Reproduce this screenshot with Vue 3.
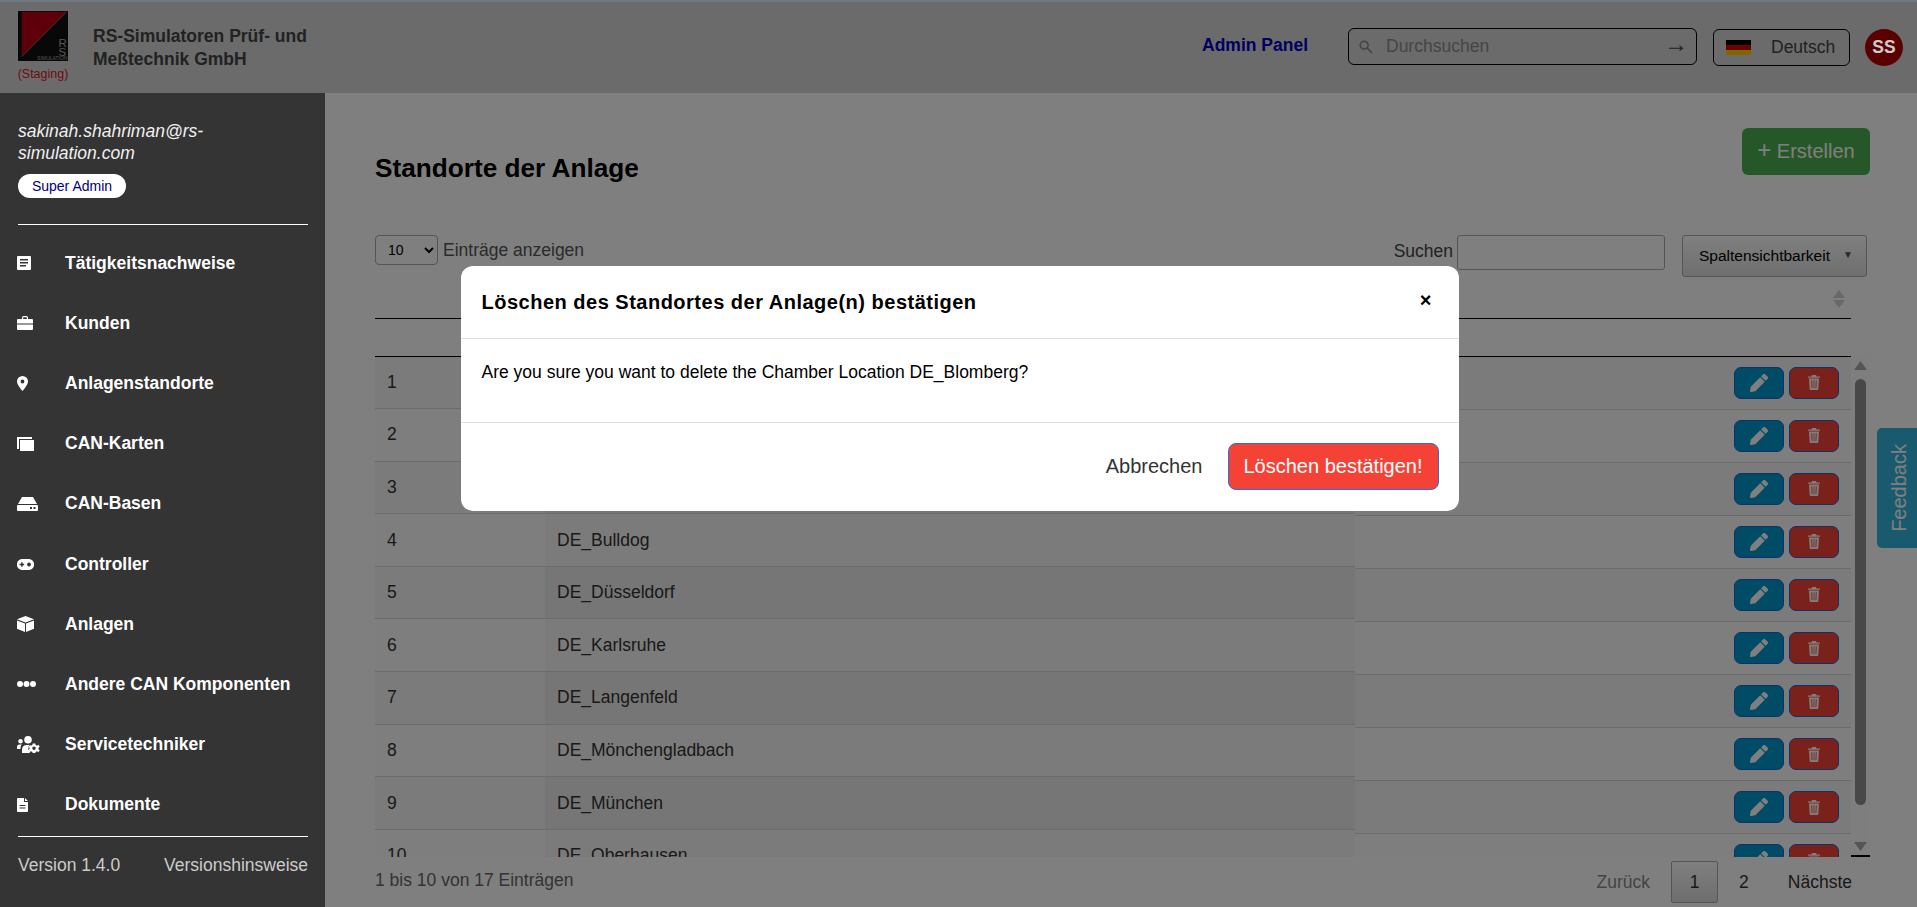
<template>
  <div class="page">
    <header class="topbar">
      <div class="brand">
        <svg class="logo" width="50" height="50" viewBox="0 0 50 50">
          <rect width="50" height="50" fill="#111" />
          <polygon points="3.700,0.700 48.700,0.700 3.700,45.700" fill="#bc0014" />
          <line x1="3.700" y1="45.700" x2="48.700" y2="0.700" stroke="#999" stroke-width="0.6" />
          <text x="40.500" y="36" class="logo-rs">R</text>
          <text x="40.500" y="45" class="logo-rs">S</text>
          <text x="49.500" y="49" class="logo-sim">SIMULATION</text>
        </svg>
        <span class="staging">(Staging)</span>
      </div>
      <div class="company">RS-Simulatoren Prüf- und<br />Meßtechnik GmbH</div>
      <a class="admin-link">Admin Panel</a>
      <div class="global-search">
        <svg width="14" height="14" viewBox="0 0 14 14" fill="none" stroke="#8c8c8c" stroke-width="1.7">
          <circle cx="5.200" cy="5.200" r="3.900" />
          <line x1="8.200" y1="8.200" x2="13" y2="13" />
        </svg>
        <input placeholder="Durchsuchen" />
        <span class="go">→</span>
      </div>
      <button class="lang">
        <span class="flag"><i class="f1"></i><i class="f2"></i><i class="f3"></i></span>
        Deutsch
      </button>
      <div class="avatar">SS</div>
    </header>

    <div class="layout">
      <aside class="sidebar">
        <div class="email">sakinah.shahriman@rs-simulation.com</div>
        <span class="role">Super Admin</span>
        <hr class="rule first" />
        <nav>
          <a v-for="item in navItems" :key="item.label" class="nav-item">
            <span class="nav-icon">
              <svg :width="item.w" :height="item.h" :viewBox="`0 0 ${item.w} ${item.h}`">
                <path :d="item.d" fill="#fff" fill-rule="evenodd" />
              </svg>
            </span>
            {{ item.label }}
          </a>
        </nav>
        <hr class="rule last" />
        <div class="version">
          <span>Version 1.4.0</span>
          <span>Versionshinsweise</span>
        </div>
      </aside>

      <main class="content">
        <div class="title-row">
          <h1>Standorte der Anlage</h1>
          <button class="create"><span class="plus">+</span> Erstellen</button>
        </div>

        <div class="controls">
          <select class="page-size"><option>10</option></select>
          <span class="size-label">Einträge anzeigen</span>
          <span class="search-label">Suchen</span>
          <input class="table-search" />
          <button class="columns">Spaltensichtbarkeit <span class="caret">▼</span></button>
        </div>

        <div class="table-area">
          <div class="table-clip">
            <table class="main-table">
              <colgroup>
                <col class="c1" />
                <col />
              </colgroup>
              <thead>
                <tr class="head-a">
                  <th></th>
                  <th>Standort</th>
                </tr>
                <tr class="head-b"><th></th><th></th></tr>
              </thead>
              <tbody>
                <tr v-for="(name, i) in locations" :key="name">
                  <td>{{ i + 1 }}</td>
                  <td>{{ name }}</td>
                </tr>
              </tbody>
            </table>
            <!-- action column is its own fixed table, its rows run a bit taller -->
            <table class="fixed-table">
              <thead>
                <tr class="head-a">
                  <th>
                    <svg class="sort" width="12" height="18" viewBox="0 0 12 18">
                      <polygon points="6,0 12,8 0,8" />
                      <polygon points="6,18 12,10 0,10" />
                    </svg>
                  </th>
                </tr>
                <tr class="head-b"><th></th></tr>
              </thead>
              <tbody>
                <tr v-for="name in locations" :key="name">
                  <td class="actions">
                    <button class="act edit">
                      <svg width="18" height="18" viewBox="0 0 512 512">
                        <path fill="#fff" d="M497.9 142.1l-46.1 46.1c-4.7 4.7-12.3 4.7-17 0l-111-111c-4.7-4.7-4.7-12.3 0-17l46.1-46.1c18.7-18.7 49.1-18.7 67.9 0l60.1 60.1c18.8 18.7 18.8 49.1 0 67.9zM284.2 99.8L21.6 362.4.4 483.9c-2.9 16.4 11.4 30.6 27.8 27.8l121.5-21.3 262.6-262.6c4.7-4.7 4.7-12.3 0-17l-111-111c-4.8-4.7-12.4-4.7-17.1 0z" />
                      </svg>
                    </button>
                    <button class="act del">
                      <svg width="12" height="15" viewBox="0 0 12 15">
                        <path fill="#fff" fill-rule="evenodd" d="M4 0h4l.6 1.500H12v1.300H0V1.500h3.400z M1 3.600h10l-.7 10.400a1 1 0 0 1-1 1H2.700a1 1 0 0 1-1-1z M3.300 5.300l.3 8h.9l-.3-8z M5.600 5.300v8h.8v-8z M7.800 5.300l-.3 8h.9l.3-8z" />
                      </svg>
                    </button>
                  </td>
                </tr>
              </tbody>
            </table>
          </div>
          <div class="scroller">
            <svg width="13" height="10" viewBox="0 0 13 10"><polygon points="6.500,0 13,9 0,9" /></svg>
            <div class="thumb"></div>
            <svg width="13" height="10" viewBox="0 0 13 10"><polygon points="0,0 13,0 6.500,9" /></svg>
          </div>
        </div>

        <div class="table-foot">
          <span class="info">1 bis 10 von 17 Einträgen</span>
          <div class="pager">
            <span class="muted">Zurück</span>
            <button class="current">1</button>
            <span class="num">2</span>
            <span class="next">Nächste</span>
          </div>
        </div>
      </main>
    </div>

    <button class="feedback"><span>Feedback</span></button>

    <div class="backdrop">
      <div class="modal">
        <div class="modal-head">
          <h2>Löschen des Standortes der Anlage(n) bestätigen</h2>
          <span class="close">×</span>
        </div>
        <div class="modal-body">Are you sure you want to delete the Chamber Location DE_Blomberg?</div>
        <div class="modal-foot">
          <button class="cancel">Abbrechen</button>
          <button class="confirm">Löschen bestätigen!</button>
        </div>
      </div>
    </div>
  </div>
</template>

<script setup>
const navItems = [
  { label: 'Tätigkeitsnachweise', w: 14, h: 14, d: 'M1 0h12a1 1 0 0 1 1 1v12a1 1 0 0 1-1 1H1a1 1 0 0 1-1-1V1a1 1 0 0 1 1-1z M3 3v1.500h8V3z M3 6v1.500h8V6z M3 9v1.500h6V9z' },
  { label: 'Kunden', w: 16, h: 14, d: 'M5 3V1.500A1.500 1.500 0 0 1 6.500 0h3A1.500 1.500 0 0 1 11 1.500V3h4a1 1 0 0 1 1 1v3.500H0V4a1 1 0 0 1 1-1z M6.200 3h3.600V1.300H6.200z M0 8.500h16V13a1 1 0 0 1-1 1H1a1 1 0 0 1-1-1z' },
  { label: 'Anlagenstandorte', w: 11, h: 15, d: 'M5.500 0A5.500 5.500 0 0 0 0 5.500C0 9 5.500 15 5.500 15S11 9 11 5.500A5.500 5.500 0 0 0 5.500 0z M5.500 3.600a1.900 1.900 0 1 1 0 3.800 1.900 1.900 0 0 1 0-3.800z' },
  { label: 'CAN-Karten', w: 17, h: 14, d: 'M0 0h15v2H2v10H0z M3 3h14v11H3z' },
  { label: 'CAN-Basen', w: 21, h: 14, d: 'M5 0h11l4 7H1z M1 8h19a1 1 0 0 1 1 1v4a1 1 0 0 1-1 1H1a1 1 0 0 1-1-1V9a1 1 0 0 1 1-1z M13 10h2v2h-2z M16.500 10h2v2h-2z' },
  { label: 'Controller', w: 17, h: 11, d: 'M5 0h7a5 5 0 0 1 5 5.500A5 5 0 0 1 12 11H5A5 5 0 0 1 0 5.500 5 5 0 0 1 5 0z M4.200 3.200h1.400v1.600h1.600v1.400H5.600v1.600H4.200V6.200H2.600V4.800h1.600z M12 3.600a1.900 1.900 0 1 0 .01 0z' },
  { label: 'Anlagen', w: 17, h: 16, d: 'M8.500 0L17 3.200 8.500 6.400 0 3.200z M0 4.500l8 3V16L0 12.800z M17 4.500l-8 3V16l8-3.200z' },
  { label: 'Andere CAN Komponenten', w: 19, h: 6, d: 'M3 0a3 3 0 1 1 0 6 3 3 0 0 1 0-6z M9.500 0a3 3 0 1 1 0 6 3 3 0 0 1 0-6z M16 0a3 3 0 1 1 0 6 3 3 0 0 1 0-6z' },
  { label: 'Servicetechniker', w: 23, h: 17, d: 'M11 0a3.800 3.800 0 1 1 0 7.600A3.800 3.800 0 0 1 11 0z M3.500 3a2.300 2.300 0 1 1 0 4.600 2.300 2.300 0 0 1 0-4.600z M0 13v-2a2.500 2.500 0 0 1 2.500-2.500h2.300A5 5 0 0 0 3.500 12v1z M5 17v-3.500A4.500 4.500 0 0 1 9.500 9H13a5.500 5.500 0 0 0 0 8z M15.700 7.500h2.600l.3 1.600 1.400.6 1.400-.9 1.300 1.900-1.200 1v1.600l1.200 1-1.300 1.900-1.400-.9-1.400.6-.3 1.600h-2.600l-.3-1.600-1.400-.6-1.400.9-1.300-1.900 1.200-1v-1.600l-1.200-1 1.300-1.900 1.400.9 1.400-.6z M17 10.500a1.700 1.700 0 1 0 .01 0z' },
  { label: 'Dokumente', w: 11, h: 14, d: 'M1 0h6v3.500a.5.500 0 0 0 .5.5H11v9a1 1 0 0 1-1 1H1a1 1 0 0 1-1-1V1a1 1 0 0 1 1-1z M8 0l3 3H8z M2.500 7h6v1h-6z M2.500 9.500h6v1h-6z' }
]

const locations = [
  'DE_Augsburg',
  'DE_Berlin',
  'DE_Blomberg',
  'DE_Bulldog',
  'DE_Düsseldorf',
  'DE_Karlsruhe',
  'DE_Langenfeld',
  'DE_Mönchengladbach',
  'DE_München',
  'DE_Oberhausen'
]
</script>

<style>
html, body {
  margin: 0;
  overflow: hidden;
  background: #fff;
}
</style>

<style scoped>
.page {
  height: 907px;
  overflow: hidden;
  font-family: "Liberation Sans", Arial, sans-serif;
  font-size: 17.5px;
  color: #333;
}

button {
  font-family: inherit;
}

.topbar {
  height: 91px;
  border-top: 2px solid #dff2ff;
  background: #d6d6d6;
  display: flex;
  align-items: flex-start;
  padding: 0 14px 0 18px;
}

.brand {
  width: 50px;
  padding-top: 9px;
  display: flex;
  flex-direction: column;
  align-items: center;
}

.logo {
  display: block;
}

.logo-rs {
  font-size: 11.5px;
  fill: #aaa;
}

.logo-sim {
  font-size: 5px;
  fill: #aaa;
  text-anchor: end;
}

.staging {
  margin-top: 6px;
  font-size: 12.5px;
  line-height: 14px;
  color: #e01414;
  white-space: nowrap;
}

.company {
  margin: 23px 0 0 25px;
  font-weight: 700;
  line-height: 22.5px;
  color: #444;
}

.admin-link {
  margin: 33px 0 0 auto;
  font-weight: 700;
  line-height: 20px;
  color: #0000c0;
}

.global-search {
  margin: 26px 0 0 40px;
  width: 349px;
  height: 37px;
  box-sizing: border-box;
  border: 1px solid #000;
  border-radius: 6px;
  display: flex;
  align-items: center;
  padding: 0 8px 0 10px;
}

.global-search input {
  flex: 1;
  min-width: 0;
  border: 0;
  outline: 0;
  background: transparent;
  margin-left: 13px;
  padding: 0;
  font: 17.5px "Liberation Sans", Arial, sans-serif;
}

.global-search input::placeholder {
  color: #8c8c8c;
}

.go {
  font-size: 24px;
  line-height: 22px;
  margin-top: -5px;
  color: #444;
}

.lang {
  margin: 27px 0 0 16px;
  width: 137px;
  height: 37px;
  box-sizing: border-box;
  border: 1px solid #000;
  border-radius: 6px;
  background: transparent;
  display: flex;
  align-items: center;
  gap: 20px;
  padding: 0 0 0 12px;
  font-size: 17.5px;
  color: #444;
}

.flag {
  width: 25px;
  height: 15px;
  display: flex;
  flex-direction: column;
}

.flag i {
  flex: 1;
}

.f1 {
  background: #000;
}

.f2 {
  background: #dd0000;
}

.f3 {
  background: #ffce00;
}

.avatar {
  position: relative;
  z-index: 11;
  margin: 27px 0 0 15px;
  width: 38px;
  height: 37px;
  border-radius: 50%;
  background: #5a0000;
  color: #ccc;
  font-weight: 700;
  display: flex;
  align-items: center;
  justify-content: center;
}

.layout {
  display: flex;
  height: 814px;
}

.sidebar {
  position: relative;
  z-index: 20;
  width: 325px;
  flex: none;
  box-sizing: border-box;
  background: #343434;
  padding: 27px 17px 0 18px;
  color: #fff;
}

.email {
  font-style: italic;
  line-height: 22px;
  color: #f0f0f0;
}

.role {
  display: block;
  width: 108px;
  margin-top: 10px;
  height: 24px;
  border-radius: 12px;
  background: #fff;
  color: #000080;
  font-size: 14px;
  line-height: 24px;
  text-align: center;
}

.rule {
  border: 0;
  border-top: 1px solid #fff;
  margin: 0;
}

.rule.first {
  margin: 26px 0 8px;
}

.rule.last {
  margin-top: 1px;
}

.nav-item {
  height: 60.2px;
  display: flex;
  align-items: center;
  margin-left: -1px;
  font-weight: 700;
  color: #fff;
}

.nav-icon {
  width: 48px;
  flex: none;
  display: flex;
  align-items: center;
}

.version {
  margin-top: 17px;
  display: flex;
  justify-content: space-between;
  line-height: 22px;
  color: #ccc;
}

.content {
  flex: 1;
  min-width: 0;
  padding: 35px 47px 0 50px;
}

.title-row {
  display: flex;
  justify-content: space-between;
  align-items: flex-start;
  height: 47px;
}

h1 {
  margin: 25px 0 0;
  font-size: 26.2px;
  line-height: 30px;
  color: #000;
}

.create {
  width: 128px;
  height: 47px;
  border: 0;
  border-radius: 6px;
  background: #4caf50;
  color: #fff;
  font-size: 20px;
  padding: 0;
}

.plus {
  font-size: 24px;
  line-height: 20px;
}

.controls {
  margin-top: 60px;
  height: 42px;
  padding-right: 3px;
  display: flex;
  align-items: flex-start;
}

.page-size {
  width: 63px;
  height: 30px;
  border: 1px solid #aaa;
  border-radius: 4px;
  background: #fff;
  font: 14px "Liberation Sans", Arial, sans-serif;
  padding-left: 8px;
  color: #000;
}

.size-label {
  margin-left: 5px;
  line-height: 30px;
  color: #555;
}

.search-label {
  margin-left: auto;
  line-height: 32px;
  color: #444;
  margin-right: 4px;
}

.table-search {
  width: 208px;
  height: 35px;
  box-sizing: border-box;
  border: 1px solid #aaa;
  border-radius: 3px;
  background: #fff;
  margin-right: 17px;
}

.columns {
  width: 185px;
  height: 42px;
  border: 1px solid #aaa;
  border-radius: 3px;
  background: linear-gradient(#fff, #dedede);
  font-size: 15.5px;
  color: #000;
  padding: 0 0 0 16px;
  display: flex;
  align-items: center;
  gap: 13px;
}

.caret {
  font-size: 10px;
  color: #555;
  margin-top: -4px;
}

.table-area {
  height: 580px;
  display: flex;
}

.table-clip {
  flex: 1;
  min-width: 0;
  overflow: hidden;
  display: flex;
  align-items: flex-start;
}

table {
  border-collapse: collapse;
  table-layout: fixed;
}

.main-table {
  width: 980px;
  flex: none;
}

.fixed-table {
  flex: 1;
  min-width: 0;
}

.c1 {
  width: 170px;
}

.head-a th {
  height: 41px;
  box-sizing: border-box;
  border-bottom: 1px solid #000;
  padding: 0 12px;
  text-align: left;
}

.fixed-table .head-a th {
  text-align: right;
  padding-right: 6px;
}

.head-b th {
  height: 38px;
  box-sizing: border-box;
  border-bottom: 1px solid #000;
}

.sort {
  display: inline-block;
  vertical-align: middle;
  margin-top: 3px;
  fill: #d0d0d0;
}

tbody td {
  height: 52.6px;
  box-sizing: border-box;
  border-bottom: 1px solid #d6d6d6;
  padding: 0 12px;
  background: #fcfcfc;
}

.main-table tbody td:nth-child(2) {
  background: #f6f6f6;
}

tbody tr:nth-child(odd) td {
  background: #f6f6f6;
}

.main-table tbody tr:nth-child(odd) td:nth-child(2) {
  background: #ececec;
}

.fixed-table tbody td {
  height: 53.1px;
}

.actions {
  text-align: right;
  white-space: nowrap;
}

.act {
  width: 50px;
  height: 32px;
  border: 1px solid #1a62d6;
  border-radius: 7px;
  padding: 0;
  margin-left: 5px;
  vertical-align: middle;
  display: inline-flex;
  align-items: center;
  justify-content: center;
}

.edit {
  background: #0099cc;
}

.del {
  background: #f44336;
}

.scroller {
  width: 19px;
  flex: none;
  box-sizing: border-box;
  background: #fdfdfd;
  border-bottom: 2px solid #000;
  margin-top: 79px;
  display: flex;
  flex-direction: column;
  align-items: center;
  padding: 5px 0 3px;
  fill: #aaa;
}

.thumb {
  width: 11px;
  flex: 1;
  margin: 8px 0 37px;
  border-radius: 6px;
  background: #909090;
}

.table-foot {
  height: 50px;
  padding-right: 18px;
  display: flex;
  justify-content: space-between;
  align-items: flex-start;
}

.info {
  line-height: 46px;
  color: #666;
}

.pager {
  margin-top: 4px;
  display: flex;
  align-items: center;
  height: 42px;
}

.muted {
  color: #888;
  margin-right: 21px;
}

.current {
  width: 47px;
  height: 42px;
  border: 1px solid #aaa;
  border-radius: 2px;
  background: linear-gradient(#fff, #dcdcdc);
  font-size: 17.5px;
  color: #333;
  padding: 0;
}

.num {
  margin-left: 21px;
  color: #333;
}

.next {
  margin-left: 39px;
  color: #333;
}

.feedback {
  position: fixed;
  right: 0;
  top: 428px;
  width: 40px;
  height: 120px;
  border: 0;
  border-radius: 5px 0 0 5px;
  background: #33b5dc;
  color: #fff;
  font-size: 20px;
  padding: 0 0 0 5px;
  display: flex;
  align-items: center;
  justify-content: center;
}

.feedback span {
  writing-mode: vertical-rl;
  transform: rotate(180deg);
}

.backdrop {
  position: fixed;
  inset: 0;
  z-index: 10;
  background: rgba(0, 0, 0, 0.5);
  display: flex;
  justify-content: center;
  align-items: flex-start;
}

.modal {
  margin: 266px 0 0 2px;
  width: 998px;
  height: 245px;
  box-sizing: border-box;
  background: #fff;
  border-radius: 12px;
  display: flex;
  flex-direction: column;
}

.modal-head {
  height: 73px;
  box-sizing: border-box;
  border-bottom: 1px solid #dee2e6;
  display: flex;
  align-items: center;
  justify-content: space-between;
  padding: 0 27px 0 21px;
}

h2 {
  margin: 0;
  font-size: 20px;
  line-height: 24px;
  letter-spacing: 0.5px;
  color: #000;
}

.close {
  font-size: 20px;
  font-weight: 700;
  line-height: 20px;
  margin-top: -5px;
  color: #000;
}

.modal-body {
  height: 84px;
  box-sizing: border-box;
  border-bottom: 1px solid #dee2e6;
  padding: 22px 21px 0;
  line-height: 22px;
  color: #000;
}

.modal-foot {
  flex: 1;
  display: flex;
  align-items: center;
  justify-content: flex-end;
  padding: 0 20px 2px 0;
}

.cancel {
  border: 0;
  background: none;
  font-size: 20px;
  color: #333;
  padding: 0;
  margin-right: 25px;
}

.confirm {
  width: 211px;
  height: 47px;
  border: 1.5px solid #2a6fe0;
  border-radius: 8px;
  background: #f44336;
  color: #fff;
  font-size: 20px;
  padding: 0;
}
</style>
